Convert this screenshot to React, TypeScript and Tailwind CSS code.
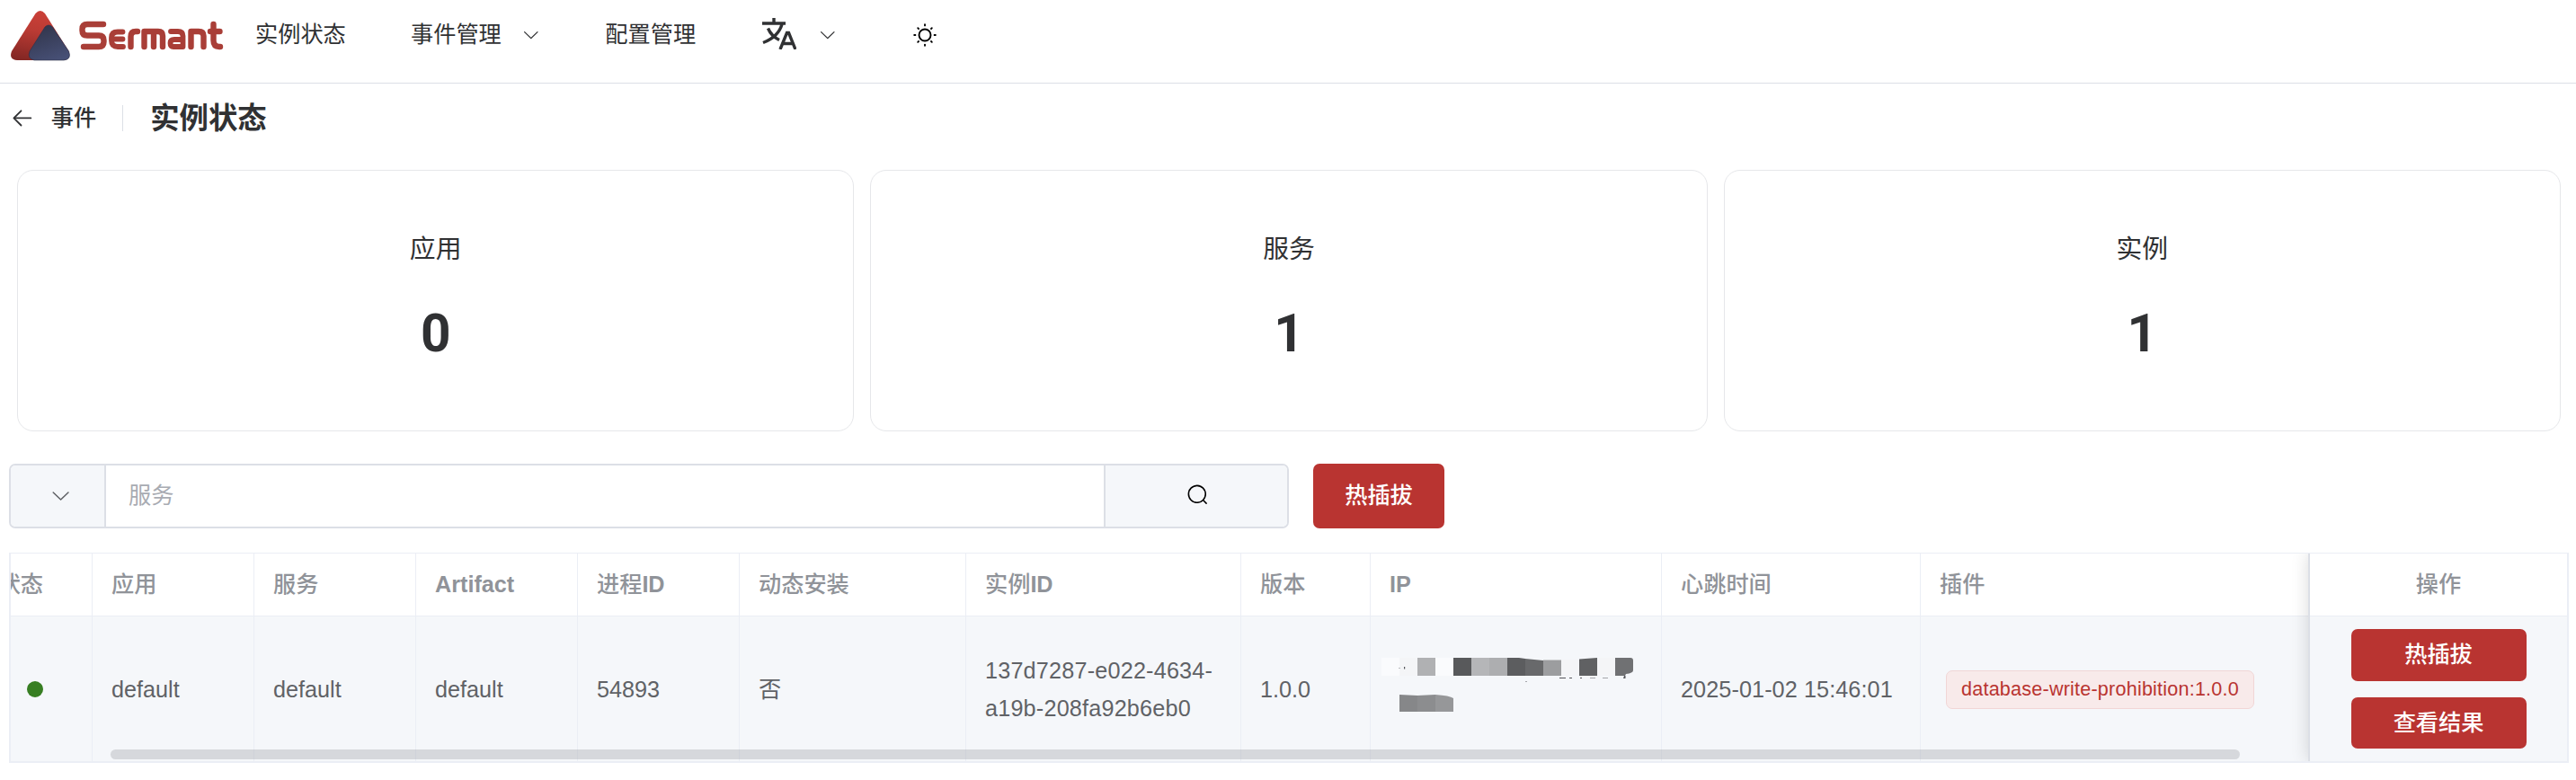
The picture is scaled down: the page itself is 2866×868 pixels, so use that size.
import React from "react";

const RED = "bg-[#b93431]";

function Chevron({ className = "h-[21.6px] w-[21.6px]" }: { className?: string }) {
  return (
    <svg viewBox="0 0 1024 1024" className={className} fill="currentColor">
      <path d="M831.872 340.864 512 652.672 192.128 340.864a30.592 30.592 0 0 0-42.752 0 29.12 29.12 0 0 0 0 41.6L489.664 714.24a32 32 0 0 0 44.672 0l340.288-331.712a29.12 29.12 0 0 0 0-41.728 30.592 30.592 0 0 0-42.752 0z" />
    </svg>
  );
}

function Logo() {
  return (
    <svg viewBox="0 0 250 72" className="h-[72px] w-[250px] shrink-0" fill="none">
      <defs>
        <linearGradient id="r" x1="0.5" y1="0" x2="0.3" y2="1">
          <stop offset="0" stopColor="#cb4038" />
          <stop offset="0.4" stopColor="#bb3b34" />
          <stop offset="1" stopColor="#842724" />
        </linearGradient>
        <linearGradient id="b" x1="0.3" y1="0" x2="0.7" y2="1">
          <stop offset="0" stopColor="#31354b" />
          <stop offset="1" stopColor="#475076" />
        </linearGradient>
      </defs>
      <path d="M39.500 15 Q44.800 9 50 15 L76.500 57 Q79 66 71 67 L19 67 Q9.500 66 13 57 Z" fill="url(#r)" />
      <path d="M50 30 Q54 26 58.500 30 L76.500 57 Q80 66 71 67 L38 67 Q30 65 33 57 Z" fill="url(#b)" stroke="#2b2f48" strokeWidth="0.600" />
      <g stroke="#a93e37" strokeWidth="6.400" strokeLinecap="round" strokeLinejoin="round">
        <path d="M115 27H97Q91.500 27 91.500 32.500V34Q91.500 39.500 97 39.500H110Q115.500 39.500 115.500 45V46.500Q115.500 52 110 52H93" />
        <path d="M125 43.500H136.500M136.500 35.500H131Q124 35.500 124 42V45Q124 52 131 52H137" strokeWidth="5.800" />
        <path d="M145.500 52V41Q145.500 35 151 35H153" />
        <path d="M160.500 52V35H176Q181 35 181 40V52M171 36V52" />
        <path d="M190 35H198Q203.500 35 203.500 40V52H193Q189.500 52 189.500 48Q189.500 44 194 44H203" strokeWidth="5.800" />
        <path d="M212.500 52V35H221Q226.500 35 226.500 40V52" />
        <path d="M237.500 27V45Q237.500 52 244 52H245M234 35H244.500" />
      </g>
    </svg>
  );
}

function MaskedIp() {
  return (
    <svg viewBox="0 0 300 80" className="-ml-[10px] -mt-[14px] h-[80px] w-[300px] shrink-0">
      <path d="M1 12h20v20H1zM61 12h20v20H61z" fill="#fafbfd" />
      <path d="M21 12h20v20H21zM201 14h20v18H201zM241 12h20v20H241z" fill="#f4f5f7" />
      <path d="M41 12h20v20H41z" fill="#b0b1b3" />
      <path d="M81 12h20v20H81z" fill="#58595b" />
      <path d="M101 12h20v20H101z" fill="#b5b6b8" />
      <path d="M121 12h20v20H121z" fill="#adaeb0" />
      <path d="M141 12h13l7 1v19H141z" fill="#5c5d5f" />
      <path d="M161 13l20 2v17H161z" fill="#68696b" />
      <path d="M181 14.500h20V32H181z" fill="#9c9d9f" />
      <path d="M221 13.500l20-1.500v20H221z" fill="#606163" />
      <path d="M261 12h17q3 0 3 3v11q0 3-8 4l-1 2H261z" fill="#707173" />
      <path d="M271 32h1.500v3H270zM199 34h7v1h-7zM210 34h3v1h-3zM222 34h2v1h-2z" fill="#55565a" />
      <path d="M233 34h6v1h-6zM247 34h6v1h-6zM161 38h2v1h-2zM20 23h2v.7h-2z" fill="#a5a6aa" />
      <path d="M26 22h1.200v2.500H26z" fill="#55565a" />
      <path d="M21 53l20 1v18H21z" fill="#868789" />
      <path d="M41 54l20-1v19H41z" fill="#8c8d8f" />
      <path d="M61 53q16 1 20 4v15H61z" fill="#969799" />
    </svg>
  );
}

const cols: { w: string; head: string; cell: React.ReactNode }[] = [
  { w: "w-[180px]", head: "应用", cell: "default" },
  { w: "w-[180px]", head: "服务", cell: "default" },
  { w: "w-[180px]", head: "Artifact", cell: "default" },
  { w: "w-[180px]", head: "进程ID", cell: "54893" },
  { w: "w-[252px]", head: "动态安装", cell: "否" },
  { w: "w-[306px]", head: "实例ID", cell: <span className="tracking-[0.2px]">137d7287-e022-4634-<br />a19b-208fa92b6eb0</span> },
  { w: "w-[144px]", head: "版本", cell: "1.0.0" },
  { w: "w-[324px]", head: "IP", cell: <MaskedIp /> },
  { w: "w-[288px]", head: "心跳时间", cell: <span className="whitespace-nowrap tracking-[0.1px]">2025-01-02 15:46:01</span> },
  {
    w: "w-[432px]",
    head: "插件",
    cell: (
      <span className="ml-[7px] mt-px flex h-[43px] w-[343px] items-center justify-center whitespace-nowrap rounded-[7px] border border-[#f1d6d6] bg-[#f8eaea] text-[21.6px] tracking-[0.2px] text-[#b93431]">
        database-write-prohibition:1.0.0
      </span>
    ),
  },
];

function HeadText({ text }: { text: string }) {
  const m = text.match(/^([^A-Z]*)([A-Z].*)?$/);
  return (
    <>
      <span>{m?.[1]}</span>
      <span className="font-bold">{m?.[2]}</span>
    </>
  );
}

function NavText({ children }: { children: React.ReactNode }) {
  return <span className="w-[101px] whitespace-nowrap">{children}</span>;
}

export default function App() {
  return (
    <div className="flex h-[868px] w-[2866px] flex-col overflow-hidden bg-white font-['Liberation_Sans','Noto_Sans_CJK_SC',sans-serif] text-[25.2px] text-[#303133]">
      <header className="flex h-[93px] shrink-0 border-b border-[#dcdfe6]">
        <Logo />
        <nav className="ml-[34px] flex h-[78px] items-center">
          <NavText>实例状态</NavText>
          <div className="ml-[72px]"><NavText>事件管理</NavText></div>
          <Chevron className="ml-[22px] h-[21.6px] w-[21.6px]" />
          <div className="ml-[72px]"><NavText>配置管理</NavText></div>
          <svg viewBox="849 20 38 35" className="mb-[3px] ml-[74px] h-[35px] w-[38px]" fill="none" stroke="#303133" strokeWidth="3.400">
            <path d="M849 26H875M862 20V27M871 27Q867 41 850 47.500M855.500 31.500Q859 40 868 44.500" />
            <path d="M869 55L876.500 36.500H878.500L886 55M872 48.500H883" />
          </svg>
          <Chevron className="ml-[24px] h-[21.6px] w-[21.6px]" />
          <svg viewBox="0 0 28 28" className="ml-[83px] h-[28px] w-[28px]" fill="none" stroke="#000" strokeWidth="1.900" strokeLinecap="round">
            <circle cx="14" cy="14" r="6.500" />
            <path d="M14 2.200v1.200M14 24.600v1.200M2.200 14h1.200M24.600 14h1.200M6.200 6.200l.8.8M21 21l.8.8M6.200 21.800l.8-.8M21 7l.8-.8" />
          </svg>
        </nav>
      </header>

      <div className="flex h-[76px] shrink-0 items-center pl-[10px]">
        <svg viewBox="0 0 1024 1024" className="h-[28.8px] w-[28.8px]" fill="currentColor">
          <path d="M224 480h640a32 32 0 1 1 0 64H224a32 32 0 0 1 0-64z" />
          <path d="m237.248 512 265.408 265.344a32 32 0 0 1-45.312 45.312l-288-288a32 32 0 0 1 0-45.312l288-288a32 32 0 1 1 45.312 45.312L237.248 512z" />
        </svg>
        <span className="ml-[18px] pt-[2px] font-medium">事件</span>
        <span className="ml-[29px] h-[29px] w-px bg-[#dcdfe6]" />
        <h1 className="ml-[30px] pt-[3px] text-[32.4px] font-bold">实例状态</h1>
      </div>

      <section className="mt-[20px] flex h-[291px] shrink-0 gap-[18px] pl-[19px] pr-[17px]">
        {[["应用", "0"], ["服务", "1"], ["实例", "1"]].map(([label, n]) => (
          <div key={label} className="flex flex-1 flex-col items-center rounded-[18px] border border-[#e6e7ea]">
            <span className="mt-[65px] text-[28.8px] leading-[44px]">{label}</span>
            <span className="mt-[39px] font-['Roboto',sans-serif] text-[58.5px] font-bold leading-[66px]">{n}</span>
          </div>
        ))}
      </section>

      <section className="mt-[36px] flex h-[72px] shrink-0 pl-[10px]">
        <div className="flex w-[1424px] overflow-hidden rounded-[7px] border-2 border-[#dcdfe6]">
          <div className="flex w-[106px] items-center justify-center border-r-2 border-[#dcdfe6] bg-[#f5f7fa] pl-[8px] text-[#606266]">
            <Chevron className="h-[25.2px] w-[25.2px]" />
          </div>
          <div className="flex flex-1 items-center pl-[25px] text-[#a8abb2]">服务</div>
          <div className="flex w-[204px] items-center justify-center border-l-2 border-[#dcdfe6] bg-[#f5f7fa] pb-[2px] pl-[4px] text-black">
            <svg viewBox="0 0 1024 1024" className="h-[25.2px] w-[25.2px]" fill="currentColor">
              <path d="m795.904 750.72 124.992 124.928a32 32 0 0 1-45.248 45.248L750.656 795.904a416 416 0 1 1 45.248-45.248zM480 832a352 352 0 1 0 0-704 352 352 0 0 0 0 704z" />
            </svg>
          </div>
        </div>
        <button className={`ml-[27px] w-[146px] rounded-[7px] font-medium text-white ${RED}`}>热插拔</button>
      </section>

      <section className="relative ml-[10px] mt-[27px] flex h-[234px] w-[2848px] shrink-0 overflow-hidden border-2 border-t border-[#ebeef5]">
        <div className="flex w-[2556px] shrink-0 overflow-hidden">
          <div className="flex w-[91px] shrink-0 flex-col border-r border-[#ebeef5]">
            <div className="flex h-[70px] items-center justify-end overflow-hidden border-b border-[#ebeef5] pr-[54px] font-medium text-[#909399]">
              <span className="whitespace-nowrap">状态</span>
            </div>
            <div className="flex flex-1 items-center bg-[#f5f7fa] pl-[18px]">
              <span className="h-[18px] w-[18px] rounded-full bg-[#377e22]" />
            </div>
          </div>
          {cols.map((c) => (
            <div key={c.head} className={`flex shrink-0 flex-col border-r border-[#ebeef5] ${c.w}`}>
              <div className="flex h-[70px] items-center border-b border-[#ebeef5] pl-[21px] font-medium text-[#909399]">
                <HeadText text={c.head} />
              </div>
              <div className="flex flex-1 items-center bg-[#f5f7fa] pl-[21px] leading-[42px] text-[#606266]">{c.cell}</div>
            </div>
          ))}
        </div>
        <div className="flex flex-1 flex-col border-l-2 border-[#dcdfe6] shadow-[0_0_18px_rgba(0,0,0,0.15)]">
          <div className="flex h-[70px] items-center justify-center border-b border-[#ebeef5] bg-white font-medium text-[#909399]">操作</div>
          <div className="flex flex-1 flex-col items-center bg-[#f5f7fa] pt-[14px] font-medium text-white">
            <button className={`h-[58px] w-[195px] rounded-[7px] ${RED}`}>热插拔</button>
            <button className={`mt-[18px] h-[57px] w-[195px] rounded-[7px] ${RED}`}>查看结果</button>
          </div>
        </div>
        <div className="absolute bottom-[2px] left-[111px] h-[11px] w-[2369px] rounded-full bg-[#909399]/30" />
      </section>
    </div>
  );
}
